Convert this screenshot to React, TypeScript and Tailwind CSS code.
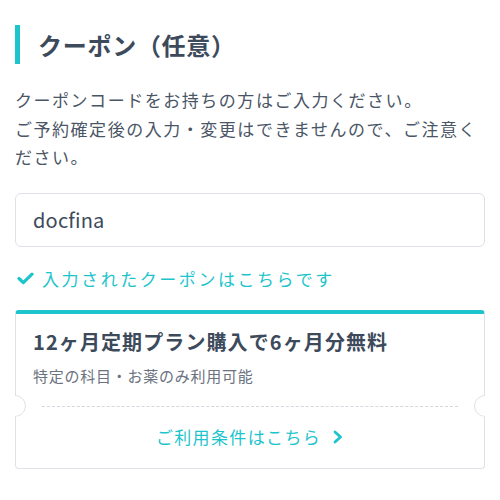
const font = { fontFamily: '"Noto Sans CJK JP", "Noto Sans", sans-serif' };

const Notch = ({ side }: { side: "left" | "right" }) =>
  side === "left" ? (
    <span className="absolute left-[-12px] top-[-11px] w-[22px] h-[22px] rounded-full bg-white border border-[#dfe1e7] [clip-path:inset(0_0_0_50%)]" />
  ) : (
    <span className="absolute right-[-12px] top-[-11px] w-[22px] h-[22px] rounded-full bg-white border border-[#dfe1e7] [clip-path:inset(0_50%_0_0)]" />
  );

const CouponSection = () => {
  return (
    <div className="w-[500px] h-[500px] bg-white px-[15px] pt-[25px] text-[#3c4a5b]" style={font}>
      {/* heading */}
      <div className="flex items-center h-[39px]">
        <span className="w-[5px] h-[39px] bg-[#1cc4cc]" />
        <h2 className="ml-[18px] text-[24px] font-bold tracking-[0.03em] leading-none">
          クーポン（任意）
        </h2>
      </div>

      <p className="mt-[22px] text-[17px] leading-[28.5px] tracking-[0.09em] text-[#4a5565]">
        クーポンコードをお持ちの方はご入力ください。
        <br />
        ご予約確定後の入力・変更はできませんので、ご注意ください。
      </p>

      <div className="mt-[21px] h-[54px] rounded-[6px] border border-[#dfe1e7] flex items-center px-[17px]">
        <span className="text-[20px] text-[#3c4a5b] tracking-[0.01em]">docfina</span>
      </div>

      <div className="mt-[19px] flex items-center text-[#1cc4cc]">
        <svg width="17" height="13" viewBox="0 0 17 13" className="ml-[2px]">
          <path d="M2 6.5 L6.3 10.6 L15 2.2" fill="none" stroke="#1cc4cc" strokeWidth="3.2" strokeLinecap="round" strokeLinejoin="round" />
        </svg>
        <span className="ml-[8px] text-[17px] tracking-[0.15em]">入力されたクーポンはこちらです</span>
      </div>

      {/* coupon card */}
      <div className="mt-[19px] rounded-[4px] border border-[#dfe1e7] border-t-[4px] border-t-[#1cc4cc] bg-white">
        <div className="px-[17px] pt-[14px] pb-[18px]">
          <div className="text-[20px] font-bold tracking-[0.055em] leading-[28px] text-[#3c4a5b]">
            12ヶ月定期プラン購入で6ヶ月分無料
          </div>
          <div className="mt-[9px] text-[15px] tracking-[0.05em] text-[#6b7280]">
            特定の科目・お薬のみ利用可能
          </div>
        </div>
        <div className="relative">
          <div className="mx-[26px] border-t border-dashed border-[#d4d7dd]" />
          <Notch side="left" />
          <Notch side="right" />
        </div>
        <div className="h-[61px] flex items-center justify-center text-[#1cc4cc]">
          <span className="text-[17px] tracking-[0.08em]">ご利用条件はこちら</span>
          <svg width="12" height="14" viewBox="0 0 12 14" className="ml-[11px]">
            <path d="M3 2 L8.5 7 L3 12" fill="none" stroke="#1cc4cc" strokeWidth="2.8" strokeLinecap="round" strokeLinejoin="round" />
          </svg>
        </div>
      </div>
    </div>
  );
};

export default function App() {
  return <CouponSection />;
}
